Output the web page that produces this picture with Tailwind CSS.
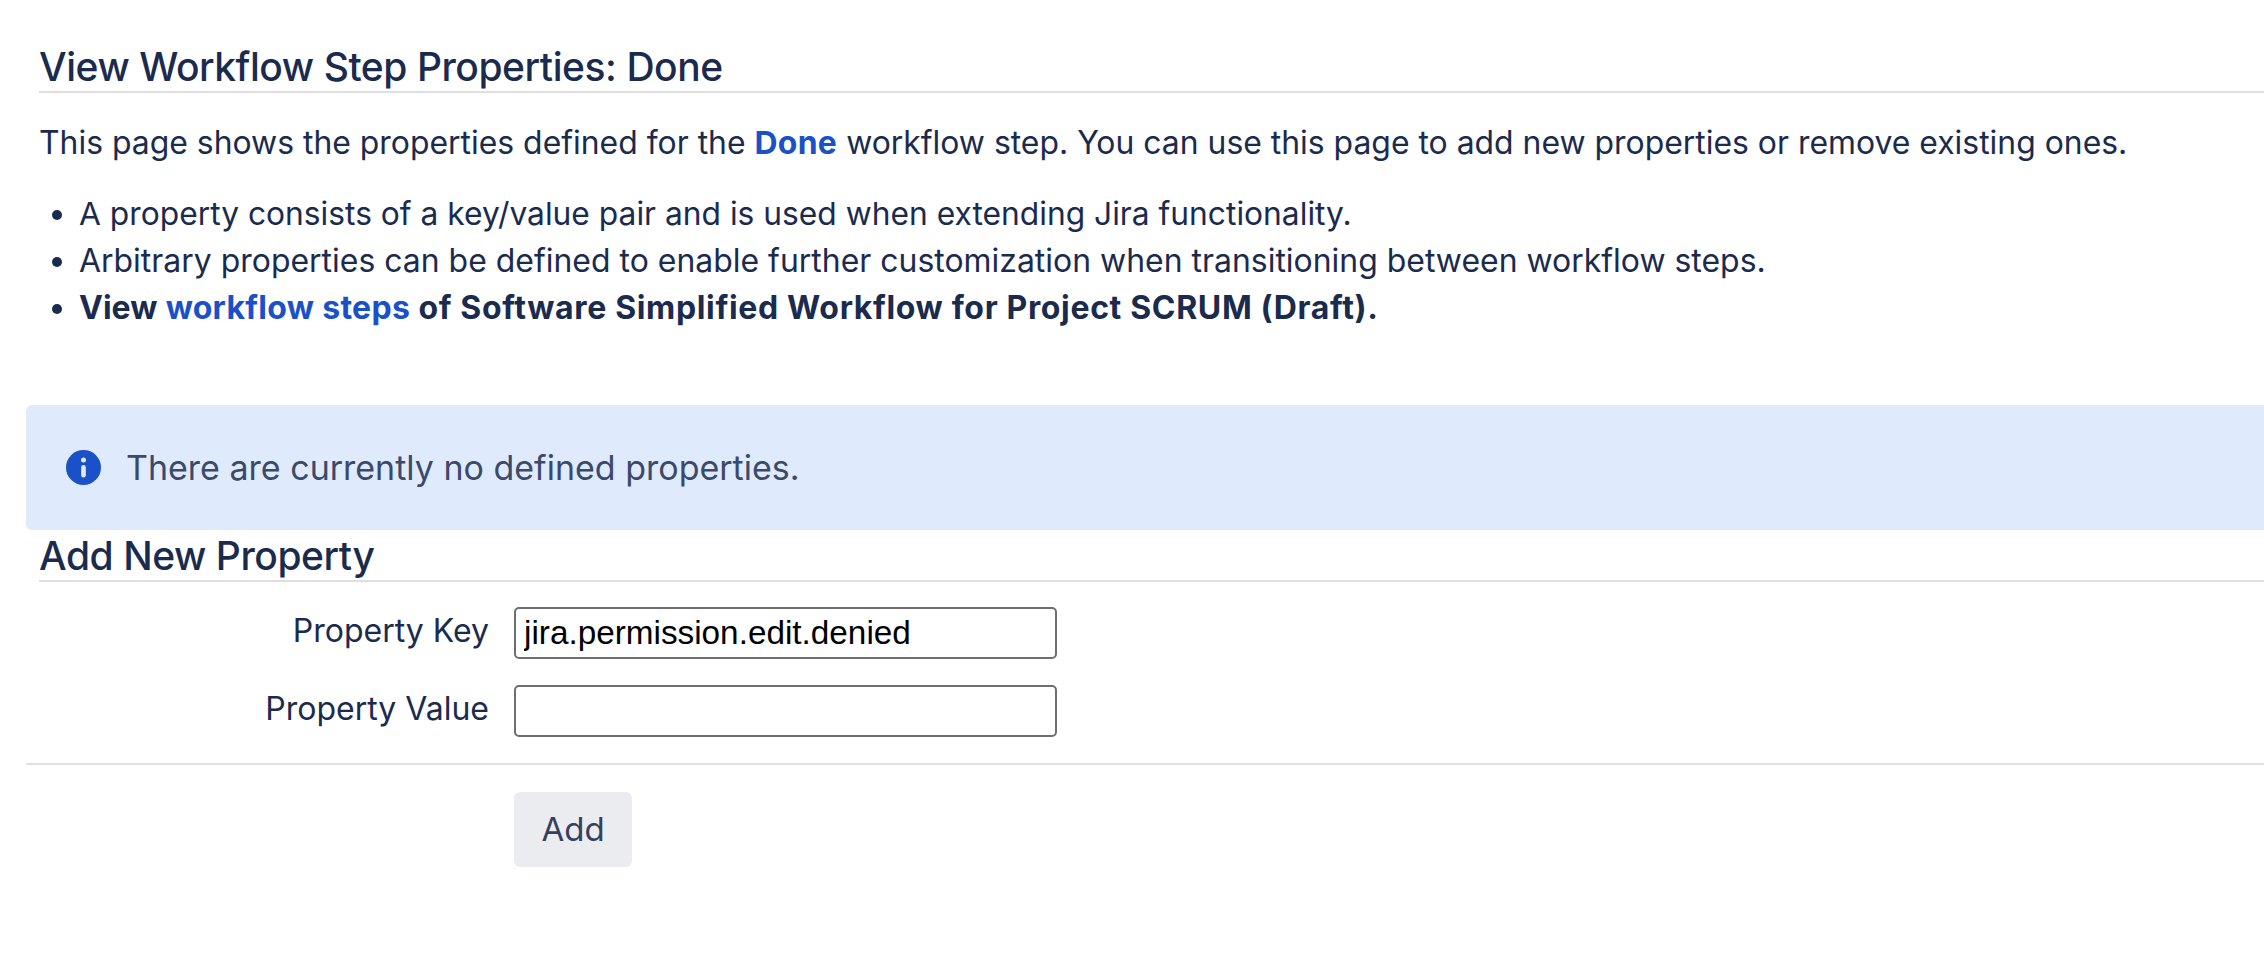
<!DOCTYPE html>
<html lang="en">
<head>
    <meta charset="UTF-8" />
    <title>View Workflow Step Properties</title>
    <script src="https://cdn.jsdelivr.net/npm/@tailwindcss/browser@4"></script>
</head>
<body class="bg-white h-[966px] overflow-hidden font-['Inter',sans-serif] text-[#1b2b4e] text-[32px] leading-[47px] pl-[26px] pt-[44px]">
    <!-- Step header -->
    <div class="ml-[13px]">
        <h2 class="text-[39px] leading-[46px] tracking-[-0.45px] font-medium border-b-2 border-[#dfdfdf] h-[49px]">View Workflow Step Properties: Done</h2>
        <p class="mt-[26px] text-[31.9px]">This page shows the properties defined for the <a href="#" class="font-bold tracking-[0.3px] text-[#1a51c9]">Done</a> workflow step. You can use this page to add new properties or remove existing ones.</p>
        <ul class="mt-[24px] pl-[40px] list-disc">
            <li class="text-[31.75px]">A property consists of a key/value pair and is used when extending Jira functionality.</li>
            <li class="text-[31.95px]">Arbitrary properties can be defined to enable further customization when transitioning between workflow steps.</li>
            <li class="font-bold tracking-[0.65px]"><span class="tracking-normal">View</span> <a href="#" class="tracking-[0.3px] text-[#1a51c9]">workflow steps</a> of Software Simplified Workflow for Project SCRUM (Draft).</li>
        </ul>
    </div>

    <!-- Info message -->
    <div class="mt-[74px] h-[125px] bg-[#e0eafd] rounded-l-[6px] flex items-center pl-[40px] gap-[25px] text-[#3b4a6b] text-[34px]">
        <svg class="w-[35px] h-[35px] shrink-0" viewBox="0 0 35 35">
            <circle cx="17.5" cy="17.5" r="17.5" fill="#1a51c9" />
            <circle cx="17.5" cy="10" r="2.5" fill="#e0eafd" />
            <rect x="15.2" y="15" width="4.6" height="12.6" rx="2.3" fill="#e0eafd" />
        </svg>
        <span>There are currently no defined properties.</span>
    </div>

    <!-- Add form -->
    <div class="ml-[13px]">
        <h3 class="text-[39px] leading-[46px] tracking-[-0.45px] font-medium border-b-2 border-[#dfdfdf] h-[49px] mt-[3px]">Add New Property</h3>
    </div>
    <form class="border-b-2 border-[#e0e0e0] pt-[25px] pb-[26px] flex flex-col gap-[26px]">
        <div class="flex items-center">
            <label class="w-[463px] pb-[5px] text-right">Property Key</label>
            <input type="text" value="jira.permission.edit.denied" class="ml-[25px] w-[543px] h-[52px] bg-white border-2 border-[#6e6e6e] rounded-[5px] px-[8px] font-['Liberation_Sans',sans-serif] text-[#000] text-[33.3px] outline-none" />
        </div>
        <div class="flex items-center">
            <label class="w-[463px] pb-[5px] text-right">Property Value</label>
            <input type="text" class="ml-[25px] w-[543px] h-[52px] bg-white border-2 border-[#6e6e6e] rounded-[5px] px-[8px] font-['Liberation_Sans',sans-serif] text-[33.3px] outline-none" />
        </div>
    </form>
    <div class="pl-[488px] pt-[27px]">
        <button type="button" class="w-[118px] h-[75px] bg-[#ebecf0] rounded-[6px] text-[#33415f] text-[33px]">Add</button>
    </div>
</body>
</html>
